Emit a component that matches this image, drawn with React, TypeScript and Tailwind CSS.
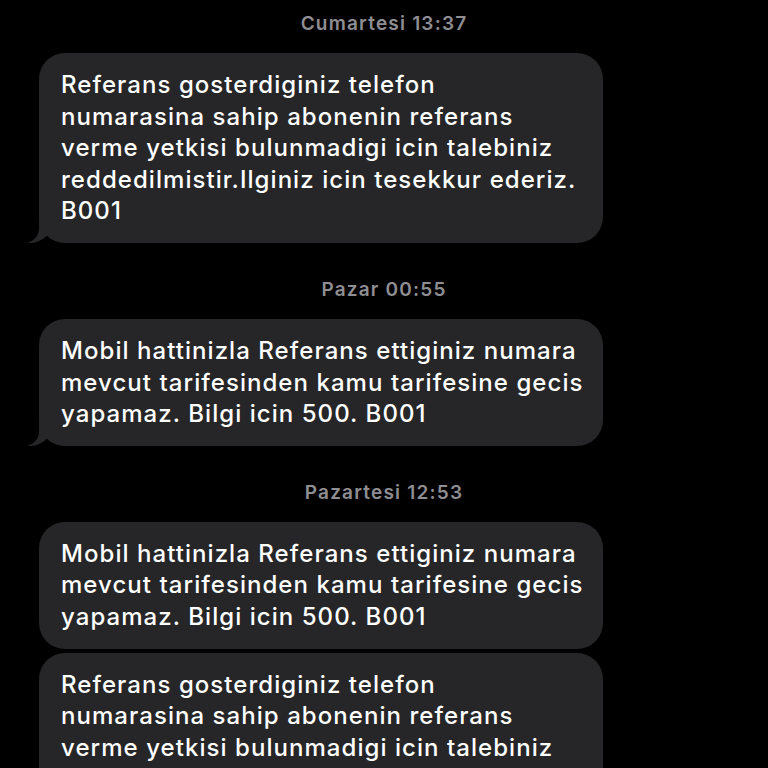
import React from "react";

const font = { fontFamily: "Inter, 'Noto Sans', 'Liberation Sans', sans-serif" };

function Tail() {
  return (
    <svg
      className="absolute left-[-13px] bottom-0"
      width="26"
      height="30"
      viewBox="0 0 26 30"
    >
      <path
        d="M13 0 L13 15 C13 23 8 28 1 30 C7 30.6 14 28.5 19 24.5 L26 17 L26 0 Z"
        fill="#262628"
      />
    </svg>
  );
}

function Bubble({ lines, tail }: { lines: string[]; tail?: boolean }) {
  return (
    <div className="relative ml-[39px] w-[564px]">
      {tail && <Tail />}
      <div className="relative rounded-[26px] bg-[#262628] pl-[22px] pr-[8px] pt-[16px] pb-[16px]">
        {lines.map((l, i) => (
          <div
            key={i}
            className="whitespace-nowrap text-[24px] leading-[31.6px] font-medium text-white tracking-[1.05px]"
          >
            {l}
          </div>
        ))}
      </div>
    </div>
  );
}

function Stamp({ text, first }: { text: string; first?: boolean }) {
  return (
    <div
      className={
        (first ? "pt-[13px] " : "mt-[36px] ") +
        "mb-[18px] text-center text-[19px] leading-[22px] font-semibold tracking-[1.2px] text-[#8e8e93]"
      }
    >
      {text}
    </div>
  );
}

const msgA = [
  "Referans gosterdiginiz telefon",
  "numarasina sahip abonenin referans",
  "verme yetkisi bulunmadigi icin talebiniz",
  "reddedilmistir.Ilginiz icin tesekkur ederiz.",
  "B001",
];
const msgB = [
  "Mobil hattinizla Referans ettiginiz numara",
  "mevcut tarifesinden kamu tarifesine gecis",
  "yapamaz. Bilgi icin 500. B001",
];

export default function App() {
  return (
    <div className="w-[768px] h-[768px] overflow-hidden bg-black" style={font}>
      <Stamp text="Cumartesi 13:37" first />
      <Bubble lines={msgA} tail />
      <Stamp text="Pazar 00:55" />
      <Bubble lines={msgB} tail />
      <Stamp text="Pazartesi 12:53" />
      <Bubble lines={msgB} />
      <div className="h-[4px]" />
      <Bubble lines={msgA} tail />
    </div>
  );
}
